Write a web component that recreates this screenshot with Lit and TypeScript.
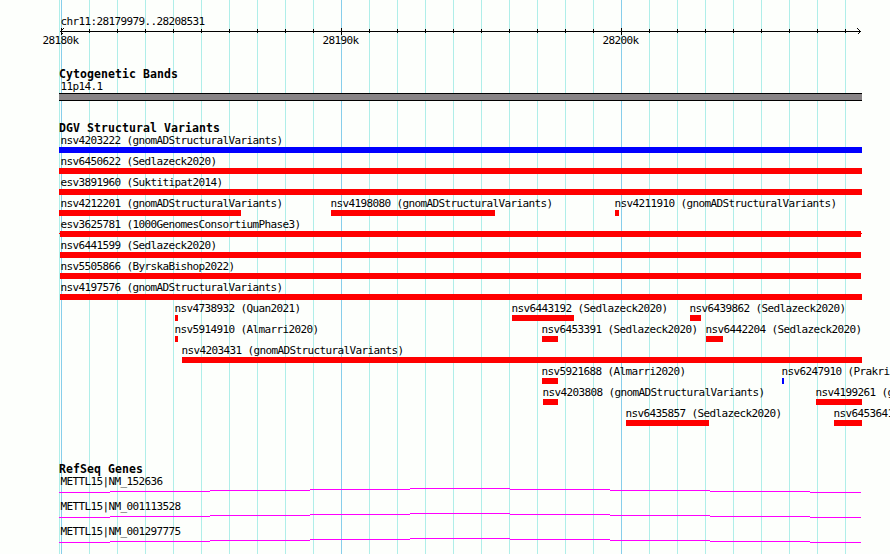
import { LitElement, css, html, svg } from 'lit'
import { customElement, property } from 'lit/decorators.js'
import { styleMap } from 'lit/directives/style-map.js'

interface Variant {
  name: string;
  start: number;
  end: number;
  kind?: "gain";
  labelAt?: number;
  span?: boolean;
}

const LEFT = 59;
const RIGHT = 862;
const MAJOR = [61, 341, 621];
const MINOR = [LEFT, ...Array.from({ length: 29 }, (_, i) => 61 + i * 28)]
  .filter((x) => !MAJOR.includes(x));

const full = (name: string, start = LEFT, end = RIGHT): Variant =>
  ({ name, start, end, labelAt: 60.5 });

const LANES: Variant[][] = [
  [{ ...full("nsv4203222 (gnomADStructuralVariants)"), kind: "gain" }],
  [full("nsv6450622 (Sedlazeck2020)")],
  [full("esv3891960 (Suktitipat2014)")],
  [
    full("nsv4212201 (gnomADStructuralVariants)", LEFT, 241),
    { name: "nsv4198080 (gnomADStructuralVariants)", start: 331, end: 495 },
    { name: "nsv4211910 (gnomADStructuralVariants)", start: 615, end: 619 },
  ],
  [{ ...full("esv3625781 (1000GenomesConsortiumPhase3)", 60, 861), span: true }],
  [full("nsv6441599 (Sedlazeck2020)", 60, 861)],
  [full("nsv5505866 (ByrskaBishop2022)", 60, 861)],
  [full("nsv4197576 (gnomADStructuralVariants)", 60)],
  [
    { name: "nsv4738932 (Quan2021)", start: 175, end: 178 },
    { name: "nsv6443192 (Sedlazeck2020)", start: 512, end: 574 },
    { name: "nsv6439862 (Sedlazeck2020)", start: 690, end: 701 },
  ],
  [
    { name: "nsv5914910 (Almarri2020)", start: 175, end: 178 },
    { name: "nsv6453391 (Sedlazeck2020)", start: 542, end: 558 },
    { name: "nsv6442204 (Sedlazeck2020)", start: 706, end: 723 },
  ],
  [{ name: "nsv4203431 (gnomADStructuralVariants)", start: 182, end: RIGHT }],
  [
    { name: "nsv5921688 (Almarri2020)", start: 542, end: 558 },
    { name: "nsv6247910 (Prakri", start: 782, end: 784, kind: "gain" },
  ],
  [
    { name: "nsv4203808 (gnomADStructuralVariants)", start: 543, end: 558 },
    { name: "nsv4199261 (gnomADStructuralVariants)", start: 816, end: RIGHT },
  ],
  [
    { name: "nsv6435857 (Sedlazeck2020)", start: 626, end: 709 },
    { name: "nsv6453641", start: 834, end: RIGHT },
  ],
];

const GENES = ["METTL15|NM_152636", "METTL15|NM_001113528", "METTL15|NM_001297775"];

// start, end and height of each step of the intron line
const STEPS = [
  [59, 110, 4], [110, 210, 3], [210, 310, 2], [310, 410, 1], [410, 510, 0],
  [510, 610, 1], [610, 710, 2], [710, 810, 3], [810, 861, 4],
];

const text = css`
  .label {
    font-family: "DejaVu Sans Mono", "Liberation Mono", monospace;
    font-size: 11px;
    letter-spacing: -0.622px;
    line-height: 12px;
    height: 12px;
    white-space: pre;
  }
`;

@customElement("scale-ruler")
export class ScaleRuler extends LitElement {
  render() {
    return html`
      <div class="label region">chr11:28179979..28208531</div>
      <svg width="890" height="7" shape-rendering="crispEdges">
        <rect x="60" y="3" width="801" height="1"></rect>
        ${MINOR.slice(1).filter((x) => x < RIGHT).map((x) => svg`<rect x=${x} y="1" width="1" height="4"></rect>`)}
        ${MAJOR.map((x) => svg`<rect x=${x} y="0" width="1" height="7"></rect>`)}
        <path d="M63.5 .5L60.5 3.5L63.5 6.5M857.5 .5L860.5 3.5L857.5 6.5"></path>
      </svg>
      <div class="ticks">
        <span class="label">28180k</span>
        <span class="label">28190k</span>
        <span class="label">28200k</span>
      </div>
    `;
  }

  static styles = [text, css`
    :host {
      display: block;
      padding-top: 16px;
    }
    .region {
      padding-left: 60.5px;
    }
    svg {
      display: block;
    }
    path {
      fill: none;
      stroke: #000;
      stroke-width: 1.2;
    }
    .ticks {
      display: grid;
      grid-template-columns: repeat(3, 280px);
      padding-left: 42.5px;
    }
  `];
}

@customElement("track-lane")
export class TrackLane extends LitElement {
  @property({ attribute: false })
  variants: Variant[] = [];

  render() {
    return this.variants.map((v) => html`
      <div class="variant">
        <div class="label" style=${styleMap({ marginLeft: `${v.labelAt ?? v.start - 0.5}px` })}>${v.name}</div>
        <div
          class="bar ${v.kind ?? "loss"} ${v.span ? "span" : ""}"
          style=${styleMap({ marginLeft: `${v.start}px`, width: `${v.end - v.start}px` })}
        ></div>
      </div>
    `);
  }

  static styles = [text, css`
    :host {
      display: grid;
      grid-template-columns: 890px;
      height: 21px;
    }
    .variant {
      grid-area: 1 / 1;
      padding-top: 1px;
    }
    .bar {
      height: 6px;
    }
    .loss {
      background: #f00;
    }
    .gain {
      background: #00f;
    }
    .span::before {
      content: "";
      display: block;
      height: 1px;
      margin: 0 -1px;
      transform: translateY(2px);
      background: #f00;
    }
  `];
}

@customElement("app-root")
export class AppRoot extends LitElement {
  render() {
    return html`
      <svg class="grid" width="890" height="554" shape-rendering="crispEdges">
        ${MINOR.filter((x) => x < RIGHT - 1).map((x) => svg`<rect class="minor" x=${x} width="1" height="554"></rect>`)}
        ${MAJOR.map((x) => svg`<rect class="major" x=${x} width="1" height="554"></rect>`)}
      </svg>
      <main>
        <scale-ruler></scale-ruler>
        <section class="cytoband">
          <h2>Cytogenetic Bands</h2>
          <div class="label">11p14.1</div>
          <div class="band"></div>
        </section>
        <section class="variants">
          <h2>DGV Structural Variants</h2>
          ${LANES.map((lane) => html`<track-lane .variants=${lane}></track-lane>`)}
        </section>
        <section class="genes">
          <h2>RefSeq Genes</h2>
          ${GENES.map((gene) => html`
            <div class="gene">
              <div class="label">${gene}</div>
              <svg width="890" height="5" shape-rendering="crispEdges">
                ${STEPS.map(([from, to, y]) => svg`<rect x=${from} y=${y} width=${to - from} height="1"></rect>`)}
              </svg>
            </div>
          `)}
        </section>
      </main>
    `;
  }

  static styles = [text, css`
    :host {
      display: grid;
      grid-template: 554px / 890px;
      overflow: hidden;
      background: #fdfffc;
      color: #000;
    }
    .grid,
    main {
      grid-area: 1 / 1;
      min-width: 0;
    }
    .minor {
      fill: #afeee9;
    }
    .major {
      fill: #87ceeb;
    }
    h2 {
      margin: 0;
      padding-left: 59px;
      font-family: "DejaVu Sans Mono", "Liberation Mono", monospace;
      font-size: 11.5px;
      font-weight: 700;
      letter-spacing: 0.077px;
      line-height: 12px;
      height: 12px;
    }
    section .label {
      padding-left: 60.5px;
    }
    .cytoband {
      padding-top: 21px;
    }
    .cytoband .label {
      margin-top: 1px;
    }
    .band {
      box-sizing: border-box;
      width: 803px;
      height: 8px;
      margin-left: 59px;
      border: solid #000;
      border-width: 1px 0;
      background: #888486;
    }
    .variants {
      padding-top: 21px;
    }
    .genes {
      padding-top: 35px;
    }
    .genes h2 {
      margin-bottom: 1px;
    }
    .gene {
      height: 25px;
    }
    .gene svg {
      display: block;
      fill: #f0f;
    }
  `];
}

declare global {
  interface HTMLElementTagNameMap {
    "app-root": AppRoot,
    "scale-ruler": ScaleRuler,
    "track-lane": TrackLane,
  }
}
